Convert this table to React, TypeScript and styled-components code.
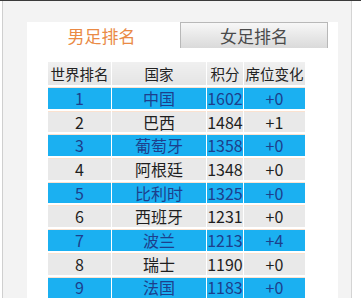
import React from 'react';
import styled, { createGlobalStyle } from 'styled-components';

const Global = createGlobalStyle`
    html, body {
        margin: 0;
        padding: 0;
        background: #ffffff;
    }
    body {
        font-family: "Noto Sans CJK SC", "Noto Sans", sans-serif;
    }
`;

const Page = styled.div`
    display: flex;
    width: 361px;
    height: 298px;
    overflow: hidden;
    border-top: 1px solid #3a3a3a;
    box-sizing: border-box;
`;

const LeftEdge = styled.div`
    width: 2px;
    border-right: 1px solid #cfcfcf;
    background: #ffffff;
`;

const Backdrop = styled.div`
    width: 348px;
    background: #f3f3f3;
    padding: 21px 0 0 24px;
    box-sizing: border-box;
`;

const RightEdge = styled.div`
    flex: 1;
    border-left: 1px solid #d4d4d4;
    background: #ffffff;
`;

const Panel = styled.div`
    width: 311px;
    height: 100%;
    background: #ffffff;
`;

const Tabs = styled.div`
    display: flex;
`;

const Tab = styled.div<{ $active?: boolean }>`
    width: ${(p) => (p.$active ? '153px' : '148px')};
    height: 26px;
    box-sizing: border-box;
    display: flex;
    align-items: center;
    justify-content: center;
    padding-right: ${(p) => (p.$active ? '4px' : '0')};
    font-size: 17px;
    color: ${(p) => (p.$active ? '#ea8a45' : '#4a4a4a')};
    background: ${(p) => (p.$active ? '#ffffff' : 'linear-gradient(#f7f7f7, #dadada)')};
    border: ${(p) => (p.$active ? 'none' : '1px solid #b8b8b8')};
    border-bottom: none;
`;

const TableWrap = styled.div`
    padding: 14px 0 0 21px;
`;

const Table = styled.table`
    border-collapse: collapse;
    table-layout: fixed;
    width: 254px;
    text-align: center;
`;

const Th = styled.th<{ $w: number }>`
    width: ${(p) => p.$w}px;
    height: 23px;
    padding: 0;
    font-size: 14.5px;
    font-weight: 400;
    color: #222;
    background: linear-gradient(#f0f0f0, #e4e4e4);
    border-right: 1px solid #ffffff;
    white-space: nowrap;
    &:last-child {
        border-right: none;
    }
`;

const Tr = styled.tr<{ $blue?: boolean }>`
    td {
        background: ${(p) => (p.$blue ? '#1bb0f1' : '#e9e9e9')};
        color: ${(p) => (p.$blue ? '#1d3f8c' : '#1e1e1e')};
    }
`;

const Td = styled.td`
    height: 21.7px;
    padding: 0;
    font-size: 16px;
    border-top: 2px solid #ffffff;
    box-shadow: inset 0 1px 0 #fbe2d0;
    border-right: 1px solid #ffffff;
    white-space: nowrap;
    line-height: 20px;
    overflow: visible;
    &:last-child {
        border-right: none;
    }
`;

const rows = [
    ['1', '中国', '1602', '+0'],
    ['2', '巴西', '1484', '+1'],
    ['3', '葡萄牙', '1358', '+0'],
    ['4', '阿根廷', '1348', '+0'],
    ['5', '比利时', '1325', '+0'],
    ['6', '西班牙', '1231', '+0'],
    ['7', '波兰', '1213', '+4'],
    ['8', '瑞士', '1190', '+0'],
    ['9', '法国', '1183', '+0'],
];

export default function App(): JSX.Element {
    return (
        <>
            <Global />
            <Page>
                <LeftEdge />
                <Backdrop>
                    <Panel>
                        <Tabs>
                            <Tab $active>男足排名</Tab>
                            <Tab>女足排名</Tab>
                        </Tabs>
                        <TableWrap>
                            <Table>
                                <thead>
                                    <tr>
                                        <Th $w={63}>世界排名</Th>
                                        <Th $w={94}>国家</Th>
                                        <Th $w={36}>积分</Th>
                                        <Th $w={61}>席位变化</Th>
                                    </tr>
                                </thead>
                                <tbody>
                                    {rows.map((r, i) => (
                                        <Tr key={r[0]} $blue={i % 2 === 0}>
                                            {r.map((c, j) => (
                                                <Td key={j}>{c}</Td>
                                            ))}
                                        </Tr>
                                    ))}
                                </tbody>
                            </Table>
                        </TableWrap>
                    </Panel>
                </Backdrop>
                <RightEdge />
            </Page>
        </>
    );
}
